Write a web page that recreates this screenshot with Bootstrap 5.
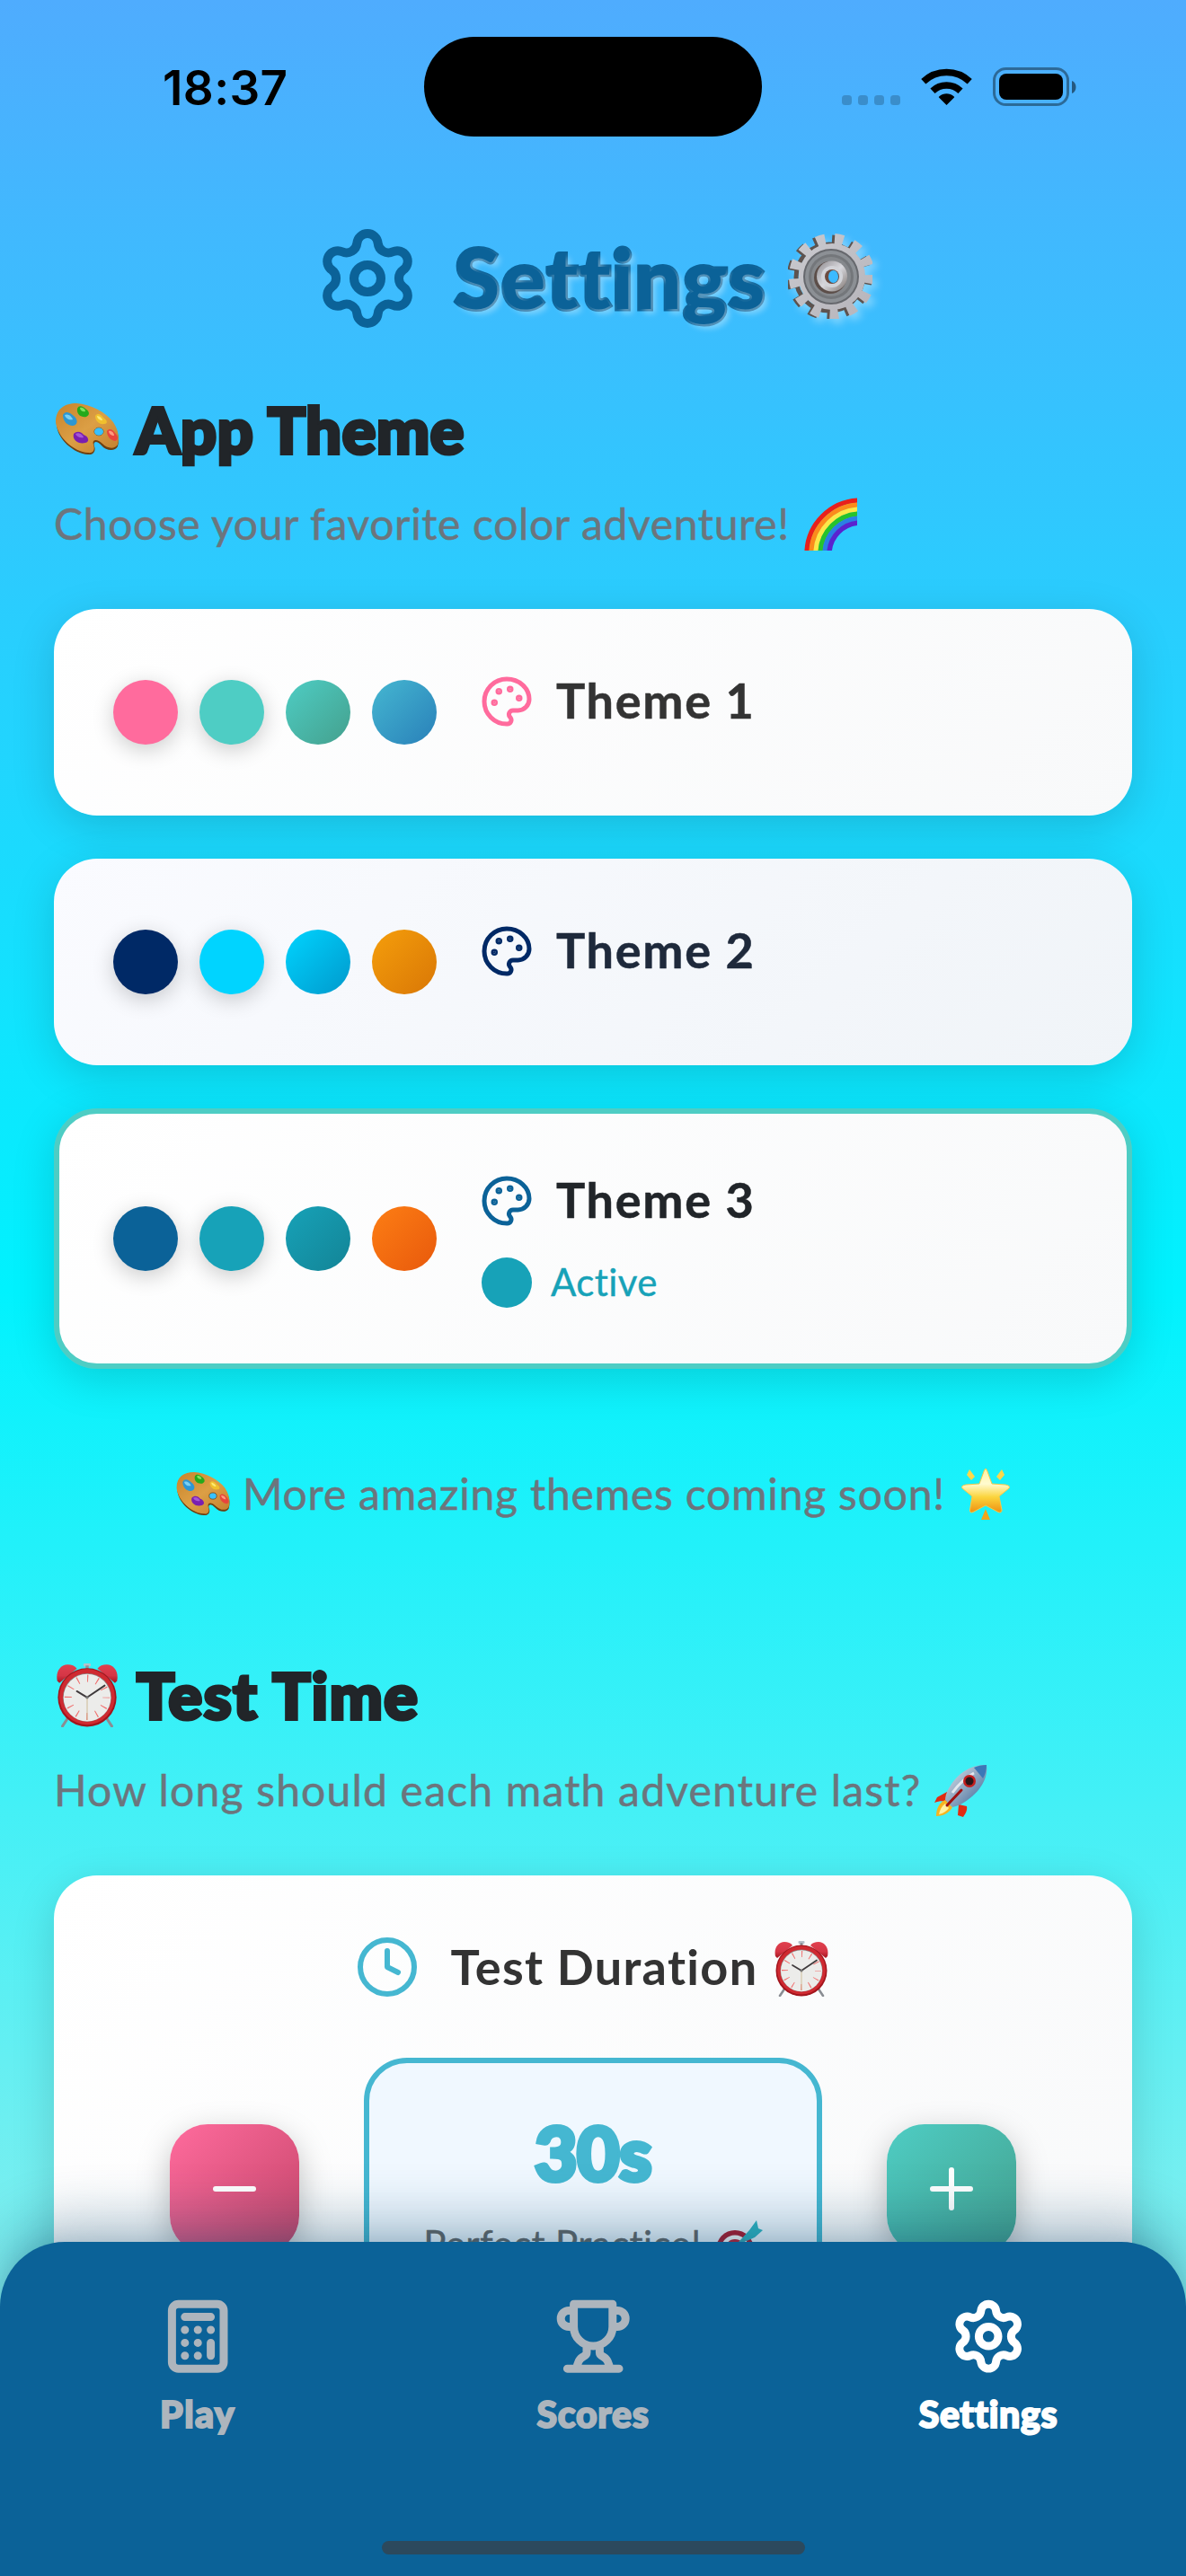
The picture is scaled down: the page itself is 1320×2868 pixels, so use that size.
<!DOCTYPE html>
<html lang="en">
<head>
<meta charset="utf-8">
<meta name="viewport" content="width=device-width, initial-scale=1">
<title>Settings</title>
<link rel="stylesheet" href="https://cdn.jsdelivr.net/npm/bootstrap@5.3.0/dist/css/bootstrap.min.css">
<script src="https://cdn.jsdelivr.net/npm/bootstrap@5.3.0/dist/js/bootstrap.bundle.min.js"></script>
<style>
body{margin:0;font-family:Lato,"Noto Sans",sans-serif;font-variant-ligatures:none;color:#212529}
svg{display:block;flex:none}
.phone{width:1320px;height:2868px;background:linear-gradient(180deg,#4facfe 0%,#00f2fe 50%,#a8edea 100%)}
/* status bar */
.status{height:186px;padding-left:181px;padding-right:121px}
.clock-time{width:291px;font:600 53px/60px Inter,sans-serif;letter-spacing:.4px;color:#000;padding-top:68px}
.island{width:376px;height:111px;border-radius:56px;background:#000;margin-top:41px}
.status-icons{padding-top:75px;margin-left:auto}
/* display type */
.fun{font-weight:900;-webkit-text-stroke:4px currentColor;stroke-linejoin:round;white-space:nowrap;margin:0;paint-order:stroke fill}
.page-title{margin-top:64px;height:120px}
.page-title .fun{font-size:92px;line-height:108px;letter-spacing:1.6px;color:#0b6298;-webkit-text-stroke-width:5px;text-shadow:5px 5px 6px rgba(255,255,255,.35);margin-left:37px;margin-top:-2px}
.page-title .gear-emoji{margin-left:24px;margin-top:-5px;filter:drop-shadow(5px 5px 4px rgba(255,255,255,.35))}
.section-title{font-size:70px;line-height:92px;height:90px;letter-spacing:.8px;color:#212529}
.hint{font-size:48px;line-height:66px;color:#6c757d;white-space:nowrap;-webkit-text-stroke:.5px currentColor;margin:0;position:relative;top:2px}
/* cards */
.panel{border-radius:48px;background:linear-gradient(135deg,#fff,#f8f9fa);box-shadow:0 12px 48px rgba(0,0,0,.15)}
.theme-card{padding:66px}
.theme-card.cool{background:linear-gradient(135deg,#fafbff,#f0f4f8)}
.theme-card.active{border:6px solid #4ecdc4;padding:60px}
.swatch{width:72px;height:72px;border-radius:50%}
.swatch.lift{box-shadow:0 6px 24px rgba(0,0,0,.2)}
.theme-info{margin-left:48px}
.theme-name{height:74px;margin-bottom:24px;gap:25px;font-size:54px;font-weight:700;letter-spacing:1.7px;line-height:68px}
.theme-name span{padding-bottom:2px;-webkit-text-stroke:.5px currentColor}
.state{height:60px;gap:20px;font-size:42px;letter-spacing:.4px;color:#17a2b8;-webkit-text-stroke:.4px currentColor}
.state span{padding-bottom:1px}
.dot{width:56px;height:56px;margin-left:2px;margin-right:1px;border-radius:50%;background:#17a2b8}
.duration{padding:66px 66px}
.duration-title{font-size:54px;font-weight:700;letter-spacing:1.3px;line-height:74px;height:72px;color:#333}
.step{width:144px;height:144px;border-radius:42px;box-shadow:0 12px 36px rgba(0,0,0,.25)}
.step.minus{background:linear-gradient(135deg,#ff6b9d,#c44569)}
.step.plus{background:linear-gradient(135deg,#4ecdc4,#44a08d)}
.readout{width:510px;height:292px;padding-top:49px;border:6px solid #45b7d1;border-radius:48px;background:#f0f8ff}
.readout .fun{font-size:82px;line-height:100px;color:#45b7d1;letter-spacing:-.5px;-webkit-text-stroke-width:5px}
.readout .note{font-size:42px;line-height:56px;letter-spacing:.4px;color:#666;margin-top:24px;-webkit-text-stroke:.4px currentColor}
/* tab bar */
.tabs{height:372px;background:#0b6298;border-radius:72px 72px 0 0;box-shadow:0 -24px 60px rgba(11,70,110,.32),0 0 24px rgba(11,70,110,.12);padding-top:62px}
.tab{flex:1 1 0;color:#adb5bd}
.tab.on{color:#fff}
.tab .fun{font-size:41px;line-height:50px;margin-top:19px;letter-spacing:.7px;-webkit-text-stroke-width:2px}
.home-bar{left:425px;bottom:24px;width:471px;height:15px;border-radius:8px;background:#2c495d}
.line{fill:none;stroke:currentColor;stroke-width:2;stroke-linecap:round;stroke-linejoin:round}
.line.bold{stroke-width:2.5}
</style>
</head>
<body>
<svg width="0" height="0" class="position-absolute" aria-hidden="true">
<defs>
<linearGradient id="wood" x1="0" y1="0" x2="1" y2="1"><stop offset="0" stop-color="#c8832b"/><stop offset=".5" stop-color="#dc9f45"/><stop offset="1" stop-color="#c27f2e"/></linearGradient>
<linearGradient id="bell" x1="0" y1="0" x2="0" y2="1"><stop offset="0" stop-color="#e0404e"/><stop offset=".6" stop-color="#d53646"/><stop offset="1" stop-color="#a5141f"/></linearGradient>
<linearGradient id="steel" x1="0" y1="0" x2="1" y2="1"><stop offset="0" stop-color="#c9c9ce"/><stop offset="1" stop-color="#b7b5bb"/></linearGradient>
<linearGradient id="hub" x1="0" y1="0" x2="1" y2="1"><stop offset="0" stop-color="#8d8a8e"/><stop offset=".5" stop-color="#d9d9de"/><stop offset="1" stop-color="#7d7470"/></linearGradient>
<linearGradient id="gold" x1="0" y1="0" x2="0" y2="1"><stop offset="0" stop-color="#fff3a0"/><stop offset=".35" stop-color="#fffbd0"/><stop offset=".65" stop-color="#fbd43c"/><stop offset="1" stop-color="#ee9112"/></linearGradient>
<linearGradient id="hull" x1="0" y1="0" x2="1" y2="1"><stop offset="0" stop-color="#dfe6ee"/><stop offset=".5" stop-color="#8fa6c0"/><stop offset="1" stop-color="#2f5f96"/></linearGradient>
<symbol id="gear" viewBox="0 0 24 24"><path d="M9.671 4.136a2.34 2.34 0 0 1 4.659 0 2.34 2.34 0 0 0 3.319 1.915 2.34 2.34 0 0 1 2.33 4.033 2.34 2.34 0 0 0 0 3.831 2.34 2.34 0 0 1-2.33 4.033 2.34 2.34 0 0 0-3.319 1.915 2.34 2.34 0 0 1-4.659 0 2.34 2.34 0 0 0-3.32-1.915 2.34 2.34 0 0 1-2.33-4.033 2.34 2.34 0 0 0 0-3.831A2.34 2.34 0 0 1 6.35 6.051a2.34 2.34 0 0 0 3.319-1.915"/><circle cx="12" cy="12" r="3"/></symbol>
<symbol id="palette" viewBox="0 0 24 24"><path d="M12 22a1 1 0 0 1 0-20 10 9 0 0 1 10 9 5 5 0 0 1-5 5h-2.25a1.75 1.75 0 0 0-1.4 2.8l.3.4a1.75 1.75 0 0 1-1.4 2.8z"/><g fill="currentColor"><circle cx="13.5" cy="6.5" r=".5"/><circle cx="17.5" cy="10.5" r=".5"/><circle cx="6.5" cy="12.5" r=".5"/><circle cx="8.5" cy="7.5" r=".5"/></g></symbol>
<symbol id="e-palette" viewBox="0 0 70 57">
<path d="M1 24C-1 8 10 1 22 2C38 3 56 11 64 23C70 32 71 40 69 48C66 54 56 53 51 47C46 41 41 42 43 48C45 53 42 58 36 57C20 56 2 40 1 24Z" fill="#6d3f10"/>
<path d="M0 21C0 6 10 0 23 0C39 1 56 10 64 21C70 30 71 39 69 46C65 52 57 50 52 45C46 39 40 40 42 46C44 52 42 56 36 55C20 54 2 38 0 21Z" fill="url(#wood)"/>
<ellipse cx="48" cy="31.500" rx="5" ry="4.300" fill="#37c1ff" stroke="#7a4a18" stroke-width="1"/>
<path d="M24 6c2-5 7-2 9 0 4 2 6 7 1 9-5 1-11-2-10-9z" fill="#25a91b"/><path d="M27 5c3-1 6 2 6 4-3 1-6-1-6-4z" fill="#7fe35f"/>
<path d="M8 13c3-6 9-2 12 1 5 4 5 10-1 11-6 0-11-5-11-12z" fill="#2d97d3"/><path d="M10 13c4-2 8 2 9 5-4 1-8-1-9-5z" fill="#7bd0f2"/>
<path d="M44 14c3-4 7-1 9 2 5 3 5 7 1 7-5 1-10-3-10-9z" fill="#f0c02d"/><path d="M46 14c3 0 6 3 6 5-3 0-6-2-6-5z" fill="#fdea74"/>
<path d="M20 34c4-4 9-2 11 1 6 2 7 8 2 9-7 2-15-3-13-10z" fill="#7a1fb0"/><path d="M22 34c4-2 8 1 9 4-4 1-8-1-9-4z" fill="#a557d6"/>
<path d="M57 31c3-4 7-1 9 2 4 4 4 8 0 9-5-1-9-5-9-11z" fill="#e8453c"/><path d="M59 31c3-1 6 2 6 5-3 0-6-2-6-5z" fill="#ff9a7c"/>
</symbol>
<symbol id="e-alarm" viewBox="0 0 60 62">
<path d="M12 52L6 61M48 52l6 9" stroke="#8a8d93" stroke-width="2.600" stroke-linecap="round"/>
<rect x="26.500" y="0" width="7" height="3" rx="1" fill="#b6c1cb"/><rect x="28.500" y="2" width="3" height="4" fill="#8b9299"/>
<path d="M1 17C-1 8 4 1 11 1c4 0 7 1 9 4L3 19z" fill="url(#bell)"/><path d="M59 17c2-9-3-16-10-16-4 0-7 1-9 4l17 14z" fill="url(#bell)"/>
<circle cx="30" cy="33" r="28.500" fill="#a2141c"/><circle cx="30" cy="32.500" r="27" fill="#cf2a31"/><circle cx="30" cy="33" r="23.500" fill="#8d8080"/><circle cx="30" cy="33.300" r="23" fill="#ececea"/>
<circle cx="30" cy="33" r="18.500" fill="none" stroke="#f0706f" stroke-width="7" stroke-dasharray="1 8.687" stroke-dashoffset=".5"/>
<path d="M30 33v22" stroke="#c9b58c" stroke-width=".8"/><path d="M30 33L47 21.500M30 33l-10-6" stroke="#3f3a3c" stroke-width="1.700" stroke-linecap="round"/><circle cx="30" cy="33" r="1.500" fill="#777"/>
</symbol>
</defs>
</svg>

<div class="phone position-relative overflow-hidden">
  <header class="status d-flex align-items-start">
    <div class="clock-time">18:37</div>
    <div class="island"></div>
    <svg class="status-icons" width="264" height="120" viewBox="0 -75 264 120" style="padding:0">
      <g fill="#000" fill-opacity=".2"><rect x="2" y="31" width="11" height="11" rx="3.500"/><rect x="20" y="31" width="11" height="11" rx="3.500"/><rect x="38" y="31" width="11" height="11" rx="3.500"/><rect x="56" y="31" width="11" height="11" rx="3.500"/></g>
      <g transform="translate(90 0)"><path d="M28.500 42 20 33.500Q19.500 33 20.200 32.500C25 28.300 32 28.300 36.800 32.500Q37.500 33 37 33.500Z"/><path d="M13 26.200A22.500 22.500 0 0 1 44 26.200" fill="none" stroke="#000" stroke-width="7.500"/><path d="M2.800 15.800A37.500 37.500 0 0 1 54.200 15.800" fill="none" stroke="#000" stroke-width="7.500"/></g>
      <rect x="171.500" y="1.500" width="82" height="40" rx="13" fill="none" stroke="#000" stroke-opacity=".4" stroke-width="3"/><rect x="177" y="7" width="71" height="29" rx="8"/><path d="M258 15v14c6-2 6-12 0-14z" fill-opacity=".5"/>
    </svg>
  </header>

  <div class="page-title d-flex align-items-center justify-content-center">
    <svg width="120" height="120" class="line" style="color:#0b6298"><use href="#gear"/></svg>
    <h1 class="fun">Settings</h1>
    <svg class="gear-emoji" width="94" height="95" viewBox="0 0 94 95">
      <g fill="none" stroke="#5d534f"><circle cx="46" cy="49" r="37" stroke-width="5"/><circle cx="46" cy="49" r="42" stroke-width="11" pathLength="26" stroke-dasharray=".95 1.05" stroke-dashoffset=".2"/></g>
      <g fill="none" stroke="url(#steel)"><circle cx="49" cy="48" r="42" stroke-width="12" pathLength="26" stroke-dasharray=".95 1.05" stroke-dashoffset=".2"/></g>
      <circle cx="49" cy="48" r="37" fill="url(#steel)"/><circle cx="48" cy="48" r="31" fill="#66686d"/><circle cx="48" cy="48" r="29" fill="#8c9095"/><circle cx="48" cy="48" r="25" fill="#74777b"/><circle cx="48" cy="48" r="22" fill="#85888c"/>
      <circle cx="47" cy="49" r="18" fill="#5c4e49"/><circle cx="49" cy="47.500" r="17" fill="url(#hub)"/><circle cx="49" cy="48" r="12" fill="#d2d3d8"/><circle cx="49" cy="48" r="8" fill="#6b4b40"/><ellipse cx="50.500" cy="48" rx="5.500" ry="7" fill="#3dbaff"/>
    </svg>
  </div>

  <main style="padding:63px 60px 0">
    <h2 class="section-title fun d-flex align-items-center"><svg width="70" height="57" style="margin:0 19px 2px 2px"><use href="#e-palette"/></svg>App Theme</h2>
    <p class="hint d-flex align-items-center" style="margin-top:25px;letter-spacing:.65px">Choose your favorite color adventure!
      <svg width="59" height="59" viewBox="0 0 59 59" style="margin-left:16px"><g fill="none" stroke-width="5.400"><circle cx="63" cy="63" r="60" stroke="#e8201c"/><circle cx="63" cy="63" r="55" stroke="#fb8b1c"/><circle cx="63" cy="63" r="50" stroke="#fde848"/><circle cx="63" cy="63" r="45" stroke="#27c32c"/><circle cx="63" cy="63" r="40" stroke="#2b7fe4"/><circle cx="63" cy="63" r="35" stroke="#5a23cf"/></g></svg>
    </p>

    <div class="d-flex flex-column" style="margin-top:64px;gap:48px">
      <div class="panel theme-card d-flex align-items-center">
        <div class="d-flex gap-4">
          <div class="swatch lift" style="background:#ff6b9d"></div><div class="swatch lift" style="background:#4ecdc4"></div><div class="swatch" style="background:linear-gradient(135deg,#4ecdc4,#44a08d)"></div><div class="swatch" style="background:linear-gradient(135deg,#45b7d1,#2980b9)"></div>
        </div>
        <div class="theme-info">
          <div class="theme-name d-flex align-items-center" style="color:#333"><svg width="60" height="60" class="line" style="color:#ff6b9d"><use href="#palette"/></svg><span>Theme 1</span></div>
        </div>
      </div>
      <div class="panel theme-card cool d-flex align-items-center">
        <div class="d-flex gap-4">
          <div class="swatch lift" style="background:#002966"></div><div class="swatch lift" style="background:#00d4ff"></div><div class="swatch" style="background:linear-gradient(135deg,#00d4ff,#0099cc)"></div><div class="swatch" style="background:linear-gradient(135deg,#f59e0b,#d97706)"></div>
        </div>
        <div class="theme-info">
          <div class="theme-name d-flex align-items-center" style="color:#1e293b"><svg width="60" height="60" class="line" style="color:#002966"><use href="#palette"/></svg><span>Theme 2</span></div>
        </div>
      </div>
      <div class="panel theme-card active d-flex align-items-center">
        <div class="d-flex gap-4">
          <div class="swatch lift" style="background:#0b6298"></div><div class="swatch lift" style="background:#17a2b8"></div><div class="swatch" style="background:linear-gradient(135deg,#17a2b8,#138496)"></div><div class="swatch" style="background:linear-gradient(135deg,#fd7e14,#e8590c)"></div>
        </div>
        <div class="theme-info">
          <div class="theme-name d-flex align-items-center"><svg width="60" height="60" class="line" style="color:#0b6298"><use href="#palette"/></svg><span>Theme 3</span></div>
          <div class="state d-flex align-items-center"><div class="dot"></div><span>Active</span></div>
        </div>
      </div>
    </div>

    <p class="hint d-flex align-items-center justify-content-center" style="margin-top:104px;letter-spacing:.8px">
      <svg width="60" height="48" style="margin-right:14px"><use href="#e-palette"/></svg>More amazing themes coming soon!
      <svg width="54" height="58" viewBox="0 0 54 58" style="margin-left:18px"><path d="M27 1Q28.500 2 30 7L34 18 49 19Q55 20 53 23L42 32 45 47Q45 51 41 49.500L27 42 13 49.500Q9 51 9.500 47L12 32 1 23Q-1 20 5 19L20 18 24 7Q25.500 2 27 1Z" fill="url(#gold)" stroke="#f5c84a" stroke-width="1"/><path d="M9 2l6 8-4 4-5-6zM45 2l-6 8 4 4 5-6z" fill="#ffd84a"/><path d="M27 46l5 12H22z" fill="#f2a51c"/></svg>
    </p>

    <h2 class="section-title fun d-flex align-items-center" style="margin-top:148px;letter-spacing:1.6px"><svg width="70" height="71" style="margin:0 20px 0 2px"><use href="#e-alarm"/></svg>Test Time</h2>
    <p class="hint d-flex align-items-center" style="margin-top:26px;letter-spacing:1.2px">How long should each math adventure last?
      <svg width="60" height="59" viewBox="0 0 60 59" style="margin-left:15px"><path d="M14 31L3 37 0 43c5-2 10-2 14-1zM27 45l9 2c1 5-2 9-4 12l-6-2z" fill="#e22b12"/><path d="M12 40C5 43 2 50 2 58c8 0 15-4 18-10z" fill="#f6b420"/><path d="M12 44c-4 3-6 7-7 12 5-1 9-4 11-7z" fill="#fff1a0"/><path d="M58 1C42 0 26 9 16 27c-3 5-4 10-4 13l8 8c5-1 10-3 14-6C51 31 60 16 58 1z" fill="url(#hull)"/><path d="M58 1c-5 0-10 1-14 3l10 12c3-5 4-10 4-15z" fill="#3b78b7"/><path d="M20 32c7-10 15-17 24-22" stroke="#fff" stroke-opacity=".7" stroke-width="3" fill="none"/><circle cx="39" cy="19" r="7" fill="#c41e1e"/><circle cx="39" cy="19" r="4.500" fill="#2a1518"/><path d="M30 29L14 46" stroke="#a01111" stroke-width="3" stroke-linecap="round"/></svg>
    </p>

    <section class="panel duration" style="margin-top:64px">
      <div class="duration-title d-flex align-items-center justify-content-center">
        <svg width="72" height="72" viewBox="0 0 24 24" class="line" style="color:#45b7d1;margin-right:35px"><circle cx="12" cy="12" r="10"/><path d="M12 6v6l4 2"/></svg>
        Test Duration
        <svg width="60" height="62" style="margin:4px 3px 0 19px"><use href="#e-alarm"/></svg>
      </div>
      <div class="d-flex align-items-center justify-content-center" style="gap:72px;margin-top:65px">
        <div class="step minus d-flex align-items-center justify-content-center"><svg width="72" height="72" viewBox="0 0 24 24" class="line text-white"><path d="M5 12h14"/></svg></div>
        <div class="readout d-flex flex-column align-items-center">
          <div class="fun">30s</div>
          <div class="note d-flex align-items-center">Perfect Practice!
            <svg width="52" height="54" viewBox="0 0 52 54" style="margin-left:16px"><circle cx="21" cy="33" r="21" fill="#b0182a"/><circle cx="21" cy="33" r="15.500" fill="#fff"/><circle cx="21" cy="33" r="11" fill="#c41d30"/><circle cx="21" cy="33" r="6" fill="#fff"/><path d="M21 33L38 15" stroke="#37a9b8" stroke-width="5"/><path d="M30 20l7-8L45 1l2 9 5 2-9 8-9 4z" fill="#2fb5c3"/></svg>
          </div>
        </div>
        <div class="step plus d-flex align-items-center justify-content-center"><svg width="72" height="72" viewBox="0 0 24 24" class="line text-white"><path d="M5 12h14M12 5v14"/></svg></div>
      </div>
    </section>
  </main>

  <nav class="tabs position-absolute bottom-0 start-0 w-100 d-flex align-items-start">
    <div class="tab d-flex flex-column align-items-center">
      <svg width="86.400" height="86.400" viewBox="0 0 24 24" class="line bold"><rect x="4" y="2" width="16" height="20" rx="2"/><path d="M8 6h8M16 14v4M16 10h.01M12 10h.01M8 10h.01M12 14h.01M8 14h.01M12 18h.01M8 18h.01"/></svg>
      <div class="fun" style="letter-spacing:1.4px">Play</div>
    </div>
    <div class="tab d-flex flex-column align-items-center">
      <svg width="86.400" height="86.400" viewBox="0 0 24 24" class="line bold"><path d="M6 9H4.500a2.500 2.500 0 0 1 0-5H6M18 9h1.500a2.500 2.500 0 0 0 0-5H18M4 22h16M10 14.660V17c0 .55-.47.98-.97 1.210C7.850 18.750 7 20.240 7 22M14 14.660V17c0 .55.47.98.97 1.210C16.150 18.750 17 20.240 17 22M18 2H6v7a6 6 0 0 0 12 0V2Z"/></svg>
      <div class="fun">Scores</div>
    </div>
    <div class="tab on d-flex flex-column align-items-center">
      <svg width="86.400" height="86.400" class="line bold"><use href="#gear"/></svg>
      <div class="fun">Settings</div>
    </div>
    <div class="home-bar position-absolute"></div>
  </nav>
</div>
</body>
</html>
